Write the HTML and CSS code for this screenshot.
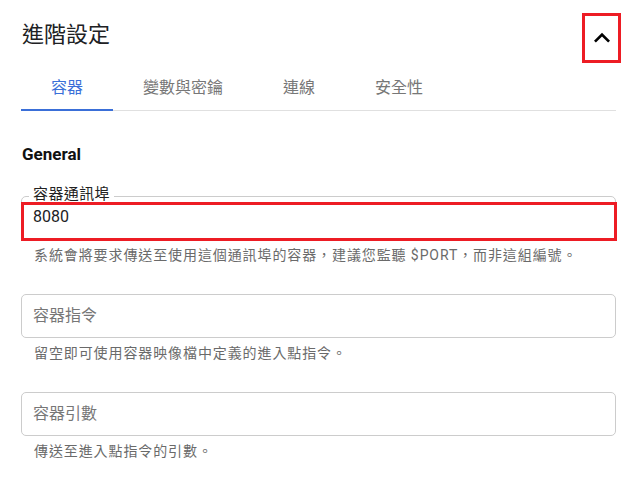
FILE: index.html
```html
<!DOCTYPE html>
<html lang="zh-Hant">
<head>
    <meta charset="UTF-8">
    <meta name="viewport" content="width=device-width, initial-scale=1.0">
    <title>進階設定</title>
    <link rel="stylesheet" href="styles.css">
</head>
<body>
    <div class="header">
        <h1 class="title">進階設定</h1>
        <button class="toggle" aria-label="收合">
            <svg width="32" height="32" viewBox="0 0 24 24"><path d="M12 8l-6 6 1.41 1.41L12 10.83l4.59 4.58L18 14z" fill="#000"/></svg>
        </button>
    </div>

    <div class="tabs">
        <span class="tab active">容器</span>
        <span class="tab">變數與密鑰</span>
        <span class="tab">連線</span>
        <span class="tab">安全性</span>
    </div>

    <h2 class="section-title">General</h2>

    <div class="fields">
        <div class="form-group">
            <div class="field">
                <span class="field-label">容器通訊埠</span>
                <span class="field-value filled">8080</span>
                <span class="highlight"></span>
            </div>
            <p class="hint">系統會將要求傳送至使用這個通訊埠的容器，建議您監聽 $PORT，而非這組編號。</p>
        </div>

        <div class="form-group">
            <div class="field">
                <span class="field-value">容器指令</span>
            </div>
            <p class="hint">留空即可使用容器映像檔中定義的進入點指令。</p>
        </div>

        <div class="form-group">
            <div class="field">
                <span class="field-value">容器引數</span>
            </div>
            <p class="hint">傳送至進入點指令的引數。</p>
        </div>
    </div>
</body>
</html>
```

FILE: styles.css
```css
body {
    font-family: Roboto, "Noto Sans CJK TC", sans-serif;
    margin: 0;
    padding: 0 21px;
    background-color: #fff;
    color: #202124;
}
.header {
    display: flex;
    justify-content: space-between;
    align-items: flex-start;
    padding-top: 13px;
}
.title {
    margin: 9px 0 0 1px;
    font-size: 22px;
    font-weight: 400;
    line-height: 26px;
}
.toggle {
    width: 39px;
    height: 50px;
    margin-right: -5px;
    padding: 0;
    display: flex;
    align-items: center;
    justify-content: center;
    background: none;
    border: 3px solid #ed1c24;
    cursor: pointer;
}
.tabs {
    display: flex;
    margin-top: 5px;
    border-bottom: 1px solid #e0e0e0;
}
.tab {
    padding: 10px 30px 11px;
    margin-bottom: -1px;
    font-size: 16px;
    line-height: 20px;
    color: #777;
    border-bottom: 2px solid transparent;
}
.tab.active {
    color: #3a6fd8;
    border-bottom-color: #3a6fd8;
}
.section-title {
    margin: 33px 0 0 1px;
    font-size: 17px;
    font-weight: 700;
    line-height: 20px;
    color: #111;
}
.fields {
    margin-top: 32px;
}
.form-group {
    margin-bottom: 29px;
}
.field {
    position: relative;
    height: 44px;
    box-sizing: border-box;
    display: flex;
    align-items: center;
    padding: 0 11px;
    border: 1px solid #ccc;
    border-radius: 5px;
}
.field-label {
    position: absolute;
    top: -11px;
    left: 7px;
    padding: 0 4px;
    background-color: #fff;
    font-size: 15px;
    line-height: 16px;
    letter-spacing: 0.4px;
    color: #222;
}
.field-value {
    font-size: 16px;
    line-height: 20px;
    color: #777;
}
.field-value.filled {
    color: #202124;
    padding-bottom: 3px;
}
.highlight {
    position: absolute;
    top: 5px;
    left: -1px;
    right: -2px;
    bottom: -2px;
    border: 3px solid #ed1c24;
    pointer-events: none;
}
.hint {
    margin: 5px 0 0;
    padding-left: 13px;
    font-size: 14px;
    line-height: 20px;
    letter-spacing: 0.9px;
    color: #6a6a6a;
}
```
